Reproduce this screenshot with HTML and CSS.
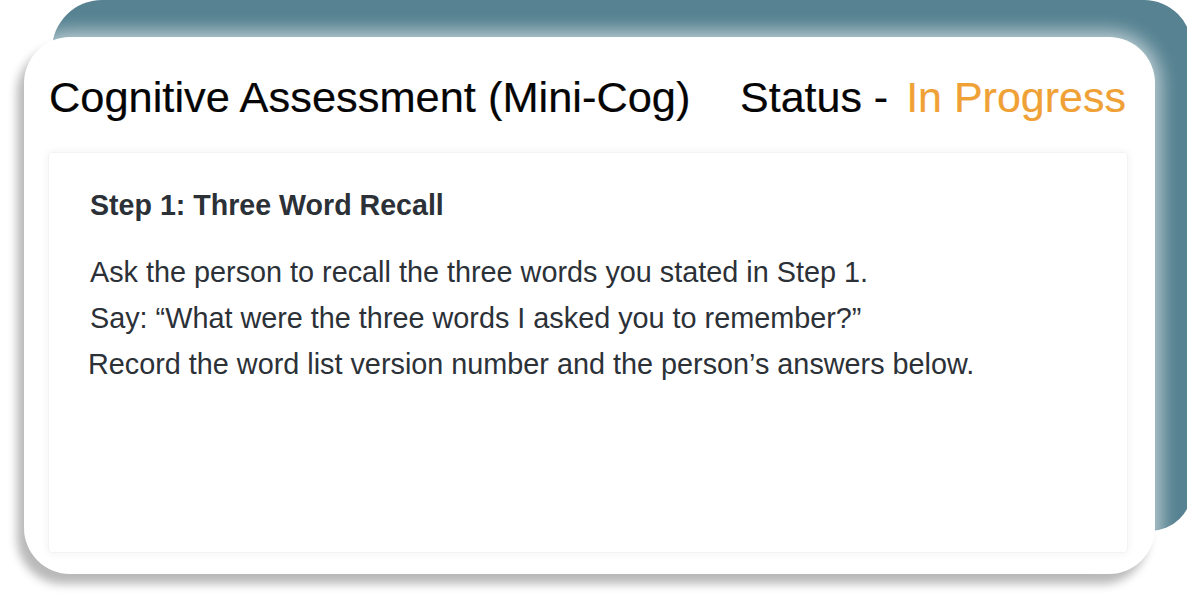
FILE: index.html
```html
<!DOCTYPE html>
<html lang="en">
<head>
<meta charset="utf-8">
<title>Cognitive Assessment (Mini-Cog)</title>
<link rel="stylesheet" href="styles.css">
</head>
<body>
<div class="stage">
  <div class="backdrop">
    <div class="card">
      <header class="card-head">
        <h1 class="title">Cognitive Assessment (Mini-Cog)</h1>
        <div class="status">Status - <span class="status-value">In Progress</span></div>
      </header>
      <section class="panel">
        <h2 class="step-title">Step 1: Three Word Recall</h2>
        <div class="instructions">
          <p class="line">Ask the person to recall the three words you stated in Step 1.</p>
          <p class="line">Say: “What were the three words I asked you to remember?”</p>
          <p class="line line-shift">Record the word list version number and the person’s answers below.</p>
        </div>
      </section>
    </div>
  </div>
</div>
</body>
</html>
```
FILE: styles.css
```css
html, body {
  margin: 0;
  padding: 0;
  background: #ffffff;
  overflow: hidden;
}

.stage {
  width: 1187px;
  height: 599px;
  overflow: hidden;
  font-family: "Liberation Sans", Arial, sans-serif;
}

.backdrop {
  margin-left: 52px;
  width: 1140px;
  height: 531px;
  background: #568291;
  border-radius: 50px 48px 42px 0;
  display: flow-root;
}

.card {
  margin: 37px 0 0 -28px;
  width: 1131px;
  height: 537px;
  box-sizing: border-box;
  padding: 0 27px 21px 24px;
  background: #ffffff;
  border-radius: 46px;
  box-shadow: -7px 10px 10px rgba(0, 0, 0, 0.28), 0 0 18px 6px rgba(255, 255, 255, 0.6);
  display: flex;
  flex-direction: column;
}

.card-head {
  height: 115px;
  flex: none;
  box-sizing: border-box;
  padding: 35px 2px 0 1px;
  display: flex;
  justify-content: space-between;
  align-items: baseline;
}

.title {
  margin: 0;
  font-weight: 400;
  font-size: 43.4px;
  line-height: 50px;
  color: #050505;
  -webkit-text-stroke: 0.2px #050505;
}

.status {
  font-size: 43px;
  line-height: 50px;
  color: #050505;
  -webkit-text-stroke: 0.2px #050505;
}

.status-value {
  margin-left: 6px;
  color: #f0a136;
  -webkit-text-stroke: 0.2px #f0a136;
}

.panel {
  flex: 1;
  box-sizing: border-box;
  padding: 35px 41px;
  border: 1px solid #f3f3f3;
  border-radius: 4px;
  box-shadow: 0 0 9px rgba(0, 0, 0, 0.06);
  color: #2c3138;
}

.step-title {
  margin: 0;
  font-weight: 700;
  font-size: 28.6px;
  line-height: 34px;
}

.instructions {
  margin-top: 27px;
}

.line {
  margin: 0;
  font-size: 28.8px;
  line-height: 46px;
}

.line-shift {
  margin-left: -2px;
}
```
